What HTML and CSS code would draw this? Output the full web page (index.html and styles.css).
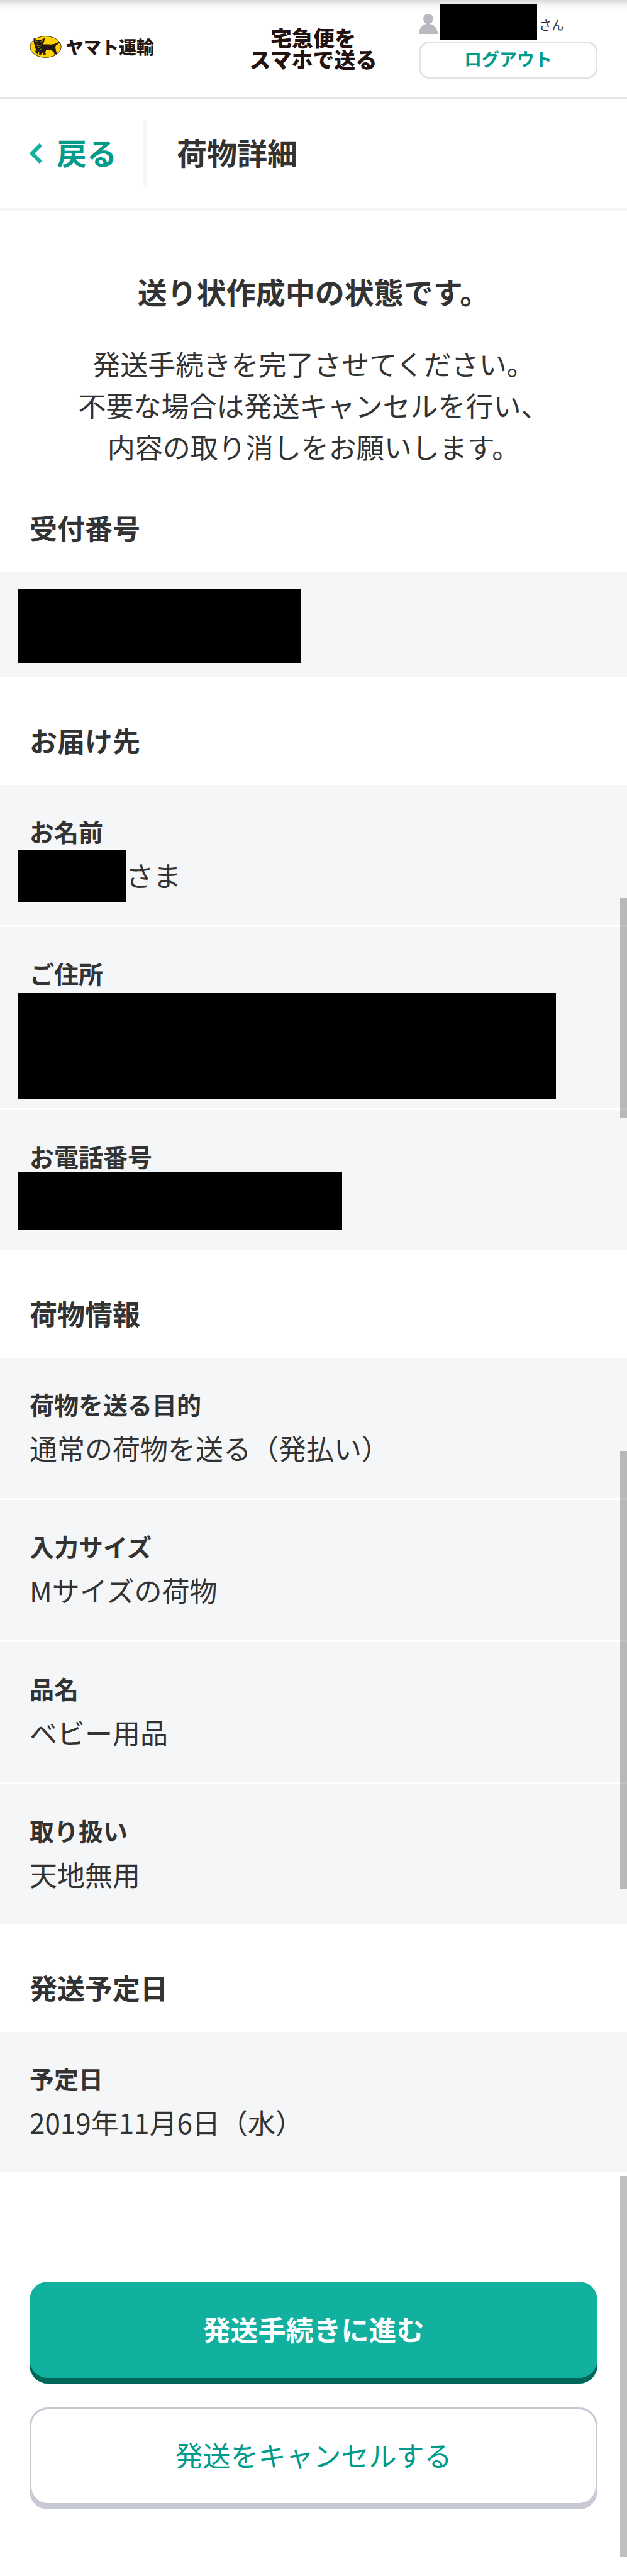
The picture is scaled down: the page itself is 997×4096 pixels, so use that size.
FILE: index.html
```html
<!DOCTYPE html>
<html lang="ja">
<head>
  <meta charset="UTF-8">
  <meta name="viewport" content="width=device-width, initial-scale=1">
  <title>荷物詳細</title>
  <link rel="stylesheet" href="styles.css">
</head>
<body>
  <header class="header">
    <a class="brand" href="#">
      <svg class="brand-mark" viewBox="0 0 162 112" aria-hidden="true">
        <ellipse cx="81" cy="56" rx="79" ry="54" fill="#ffd200" stroke="#3a2c10" stroke-width="3"/>
        <path fill="#231815" d="M20 11 L34 20 L58 21 L77 11 L73 32 L67 43 L96 43 Q118 45 127 41 L152 29 L155 34 L133 49 Q129 60 133 70 L138 92 L126 96 L123 84 L109 70 Q95 74 84 71 L79 84 L83 94 L70 96 L66 84 L57 96 L46 94 L51 86 L43 82 L42 95 L33 88 L28 80 L33 70 L26 58 L29 50 L22 40 Z"/>
        <path fill="none" stroke="#ffd200" stroke-width="2" d="M26 24 L42 30 M68 23 L52 30 M28 37 L42 38 M52 38 L66 35 M36 49 L58 48 M40 60 L56 56 M48 74 L60 66"/>
      </svg>
      <span class="brand-name">ヤマト運輸</span>
    </a>
    <div class="service">宅急便を<br>スマホで送る</div>
    <div class="user">
      <div class="user-name">
        <svg class="user-icon" viewBox="0 0 30 32" aria-hidden="true">
          <circle cx="15" cy="8" r="8" fill="#b9bac0"/>
          <path fill="#b9bac0" d="M12 13 h6 v3 C25 17 30 24 30 32 H0 C0 24 5 17 12 16 Z"/>
        </svg>
        <span class="mask mask-user"></span>
        <span class="user-suffix">さん</span>
      </div>
      <button class="logout" type="button">ログアウト</button>
    </div>
  </header>

  <nav class="title-bar">
    <a class="back" href="#">
      <svg class="back-icon" viewBox="0 0 20 32" aria-hidden="true">
        <path d="M18 2 L4 16 L18 30" fill="none" stroke="#12b09f" stroke-width="6"/>
      </svg>
      <span class="back-label">戻る</span>
    </a>
    <h1 class="page-title">荷物詳細</h1>
  </nav>

  <main>
    <div class="intro">
      <p class="intro-title">送り状作成中の状態です。</p>
      <p class="intro-text">発送手続きを完了させてください。<br>不要な場合は発送キャンセルを行い、<br>内容の取り消しをお願いします。</p>
    </div>

    <section>
      <h2 class="heading heading-first">受付番号</h2>
      <div class="number">
        <span class="mask mask-number"></span>
      </div>
    </section>

    <section>
      <h2 class="heading">お届け先</h2>
      <dl class="list">
        <div class="row">
          <dt>お名前</dt>
          <dd><span class="mask mask-name"></span>さま</dd>
        </div>
        <div class="row">
          <dt>ご住所</dt>
          <dd class="address"><span class="mask mask-address"></span></dd>
        </div>
        <div class="row">
          <dt>お電話番号</dt>
          <dd><span class="mask mask-tel"></span></dd>
        </div>
      </dl>
    </section>

    <section>
      <h2 class="heading">荷物情報</h2>
      <dl class="list">
        <div class="row">
          <dt>荷物を送る目的</dt>
          <dd>通常の荷物を送る（発払い）</dd>
        </div>
        <div class="row">
          <dt>入力サイズ</dt>
          <dd>Mサイズの荷物</dd>
        </div>
        <div class="row">
          <dt>品名</dt>
          <dd>ベビー用品</dd>
        </div>
        <div class="row">
          <dt>取り扱い</dt>
          <dd>天地無用</dd>
        </div>
      </dl>
    </section>

    <section>
      <h2 class="heading">発送予定日</h2>
      <dl class="list">
        <div class="row">
          <dt>予定日</dt>
          <dd>2019年11月6日（水）</dd>
        </div>
      </dl>
    </section>

    <div class="actions">
      <button class="btn btn-primary" type="button">発送手続きに進む</button>
      <button class="btn btn-cancel" type="button">発送をキャンセルする</button>
    </div>
  </main>

  <div class="scroll scroll-1"></div>
  <div class="scroll scroll-2"></div>
  <div class="scroll scroll-3"></div>
</body>
</html>
```
FILE: styles.css
```css
* {
  box-sizing: border-box;
}
body {
  position: relative;
  margin: 0;
  background: #fff;
  color: #333;
  font-family: "Noto Sans CJK JP", sans-serif;
  font-size: 44px;
  line-height: 66px;
}
h1, h2, p, dl, dd {
  margin: 0;
}
a {
  text-decoration: none;
}
button {
  display: block;
  font-family: inherit;
  cursor: pointer;
}

/* header */
.header {
  display: grid;
  grid-template-columns: 1fr 270px 284px;
  align-items: start;
  height: 158px;
  padding: 0 47px;
  border-bottom: 3px solid #e3e4ea;
  background: linear-gradient(#dadada, #f7f7fa 9px, #fff 20px);
}
.brand {
  display: flex;
  align-items: center;
  gap: 7px;
  padding-top: 57px;
  color: #231815;
}
.brand-mark {
  width: 51px;
  height: 35px;
}
.brand-name {
  font-size: 28px;
  font-weight: 900;
  line-height: 35px;
}
.service {
  width: 204px;
  padding-top: 43px;
  color: #231210;
  font-size: 34px;
  font-weight: 900;
  line-height: 34px;
  text-align: center;
  white-space: nowrap;
}
.user-name {
  display: flex;
  align-items: center;
  gap: 3px;
  padding-top: 7px;
  margin-bottom: 2px;
  font-size: 20px;
  line-height: 24px;
}
.user-icon {
  width: 30px;
  height: 32px;
  margin-top: 4px;
}
.user-suffix {
  padding-top: 8px;
}
.mask {
  flex: none;
  background: #000;
}
.mask-user {
  width: 155px;
  height: 57px;
}
.logout {
  width: 100%;
  height: 59px;
  padding: 0 0 4px;
  border: 3px solid #e1e2ea;
  border-radius: 16px;
  background: #fff;
  color: #009b8a;
  font-size: 28px;
  font-weight: bold;
  line-height: 49px;
}

/* title bar */
.title-bar {
  display: flex;
  align-items: center;
  height: 177px;
  padding: 0 47px;
  border-bottom: 5px solid #f5f6f8;
  font-size: 48px;
  font-weight: bold;
}
.back {
  display: flex;
  align-items: center;
  gap: 23px;
  height: 106px;
  padding-right: 41px;
  border-right: 6px solid #f5f6f8;
  color: #009b8a;
}
.back-icon {
  width: 20px;
  height: 32px;
}
.page-title {
  padding-left: 48px;
  font-size: 48px;
}
.back-label,
.page-title {
  padding-bottom: 6px;
}

/* message */
.intro {
  padding-top: 98px;
  text-align: center;
}
.intro-title {
  margin-bottom: 52px;
  font-size: 47px;
  font-weight: bold;
  line-height: 60px;
}

/* detail sections */
.heading {
  padding: 70px 47px 41px;
  font-size: 44px;
  line-height: 60px;
}
.heading-first {
  padding-top: 66px;
}
.number {
  display: flex;
  padding: 27px 28px 22px;
  background: #f5f6f8;
}
.mask-number {
  width: 451px;
  height: 118px;
}
.list {
  display: grid;
  gap: 3px;
}
.row {
  padding: 43px 47px 47px;
  background: #f5f6f8;
}
.row dt {
  margin-bottom: 7px;
  font-size: 39px;
  font-weight: bold;
  line-height: 60px;
}
.row dd {
  display: flex;
  align-items: center;
  height: 66px;
}
.row .mask {
  margin: 4px 0 0 -19px;
}
.mask-name {
  width: 172px;
  height: 83px;
}
.row .address {
  height: 131px;
}
.row .mask-address {
  width: 856px;
  height: 168px;
  margin-top: 26px;
}
.mask-tel {
  width: 516px;
  height: 92px;
}

/* buttons */
.actions {
  display: grid;
  gap: 38px;
  padding: 174px 47px 106px;
}
.btn {
  height: 162px;
  padding: 0 0 12px;
  border: none;
  border-radius: 29px;
  font-size: 44px;
}
.btn-primary {
  background: #12b09f;
  box-shadow: inset 0 -9px #00675b;
  color: #fff;
  font-weight: bold;
}
.btn-cancel {
  border: 3px solid #c6c8d4;
  background: #fff;
  box-shadow: inset 0 -7px #c6c8d4;
  color: #009b8a;
}

/* scroll thumbs over the right edge */
.scroll {
  position: absolute;
  right: 0;
  width: 11px;
  background: rgba(0, 0, 0, 0.25);
}
.scroll-1 {
  top: 1428px;
  height: 350px;
}
.scroll-2 {
  top: 2307px;
  height: 697px;
}
.scroll-3 {
  top: 3460px;
  height: 606px;
}
```
